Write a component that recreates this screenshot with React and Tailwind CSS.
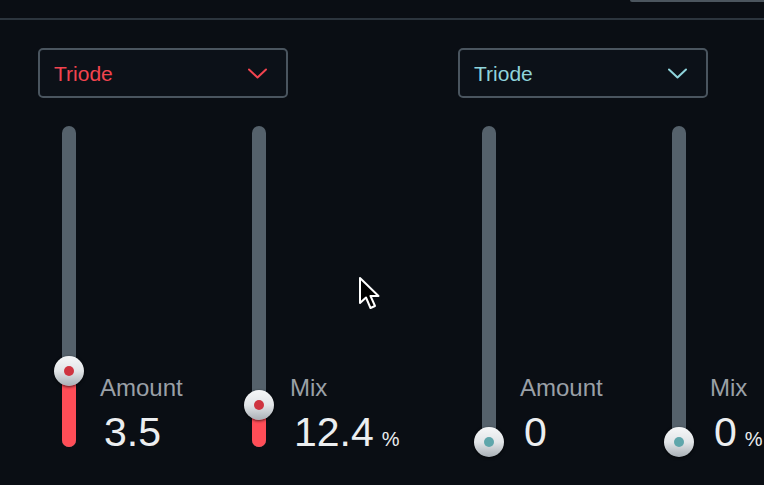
import React from "react";

function Chevron({ color }) {
  return (
    <svg width="19" height="11" viewBox="0 0 19 11" fill="none">
      <polyline points="1,1.5 9.5,9.5 18,1.5" stroke={color} strokeWidth="2" strokeLinecap="round" strokeLinejoin="round" />
    </svg>
  );
}

function Dropdown({ color }) {
  return (
    <div className="h-[50px] w-[250px] border-2 border-[#4a555f] rounded-[5px] bg-[#0c1118] pl-[14px] pr-[19px] flex items-center justify-between">
      <span className="text-[21px] leading-none" style={{ color }}>Triode</span>
      <Chevron color={color} />
    </div>
  );
}

function Slider({ knobTop, fill, accent, dot, label, value, unit, wide }) {
  return (
    <div className={"flex shrink-0 " + (wide ? "w-[190px]" : "")}>
      <div className="relative w-[14px] h-[321px] rounded-full bg-[#55616b] shrink-0">
        {fill > 0 && (
          <div className="absolute inset-x-0 bottom-0 rounded-full" style={{ height: fill, background: accent }} />
        )}
        <div
          className="absolute left-1/2 -translate-x-1/2 w-[30px] h-[30px] rounded-full bg-gradient-to-b from-[#f6f7f8] via-[#e2e5e8] to-[#a9b0b6] shadow-[0_1px_3px_rgba(0,0,0,0.7)] flex items-center justify-center"
          style={{ top: knobTop }}
        >
          <div className="w-[10px] h-[10px] rounded-full" style={{ background: dot }} />
        </div>
      </div>
      <div className="ml-[24px] pt-[248px] whitespace-nowrap">
        <div className="text-[24px] leading-[28px] text-[#9aa0a7]">{label}</div>
        <div className="mt-[10px] flex items-baseline ml-[4px]">
          <span className="text-[41px] leading-[40px] text-[#eceef0]">{value}</span>
          {unit && <span className="text-[20px] leading-none ml-[8px] text-[#eceef0]">{unit}</span>}
        </div>
      </div>
    </div>
  );
}

function Channel({ color, accent, dot, amountTop, amountFill, mixTop, mixFill, amount, mix }) {
  return (
    <div className="w-[250px] shrink-0 flex flex-col">
      <Dropdown color={color} />
      <div className="mt-[28px] pl-[24px] flex">
        <Slider wide knobTop={amountTop} fill={amountFill} accent={accent} dot={dot} label="Amount" value={amount} />
        <Slider knobTop={mixTop} fill={mixFill} accent={accent} dot={dot} label="Mix" value={mix} unit="%" />
      </div>
    </div>
  );
}

export default function App() {
  return (
    <div className="relative w-[764px] h-[485px] overflow-hidden bg-[#0a0e14] font-['Liberation_Sans',Arial,sans-serif]">
      <div className="h-[18px] flex justify-end">
        <div className="w-[134px] h-[2px] bg-[#4b555e] rounded-bl-[4px]" />
      </div>
      <div className="h-[2px] bg-[#2c353e]" />
      <div className="pt-[28px] pl-[38px] flex gap-[170px]">
        <Channel
          color="#f2444f"
          accent="#ff4d57"
          dot="#cf3440"
          amountTop={230}
          amountFill={76}
          mixTop={264}
          mixFill={42}
          amount="3.5"
          mix="12.4"
        />
        <Channel
          color="#8fd4db"
          accent="#8fd4db"
          dot="#5fa6ab"
          amountTop={301}
          amountFill={0}
          mixTop={301}
          mixFill={0}
          amount="0"
          mix="0"
        />
      </div>
      <svg className="absolute left-[358px] top-[276px]" width="24" height="36" viewBox="0 0 24 36">
        <path
          d="M2 2 L2 27 L8 21.5 L12.5 32 L17 30 L12.5 20 L20.5 20 Z"
          fill="#000"
          stroke="#fff"
          strokeWidth="2"
          strokeLinejoin="round"
        />
      </svg>
    </div>
  );
}
